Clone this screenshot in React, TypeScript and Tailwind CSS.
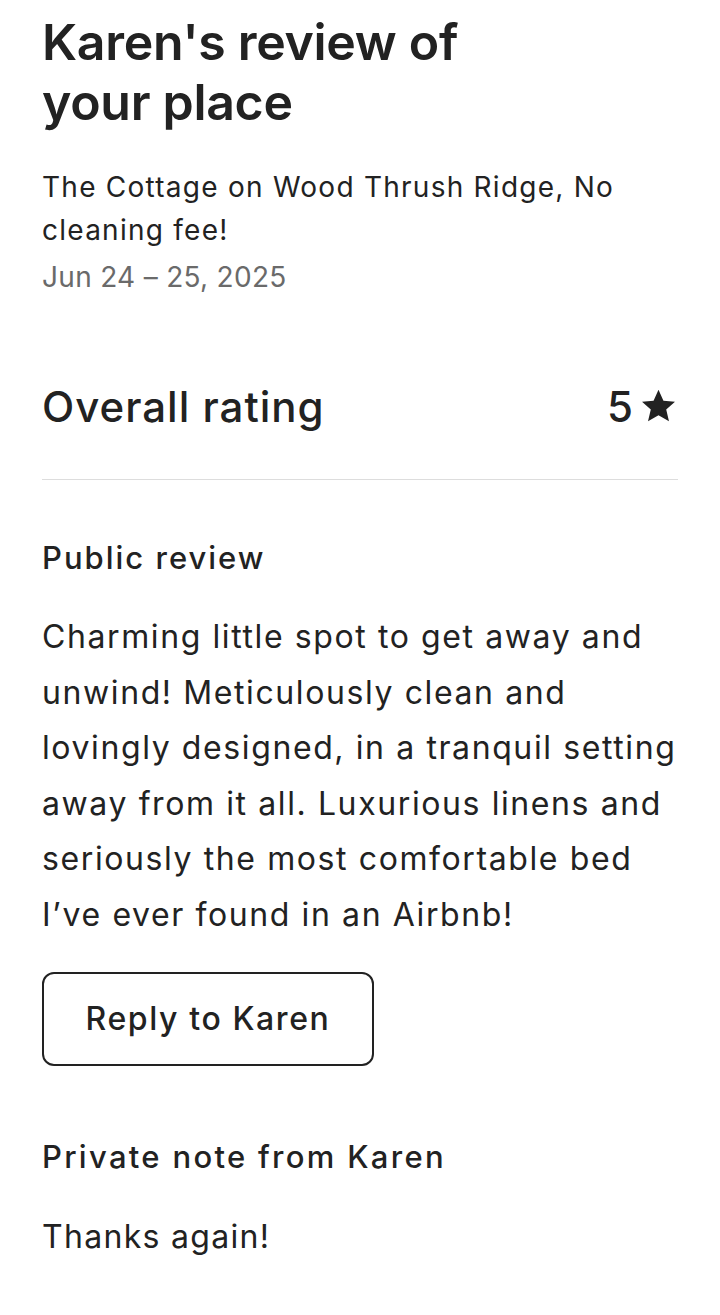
import React from "react";

const reviewLines = [
  "Charming little spot to get away and",
  "unwind! Meticulously clean and",
  "lovingly designed, in a tranquil setting",
  "away from it all. Luxurious linens and",
  "seriously the most comfortable bed",
  "I’ve ever found in an Airbnb!",
];

export default function App() {
  return (
    <div
      className="w-[720px] min-h-[1315px] bg-white px-[42px] pt-[12px] text-[#222222]"
      style={{ fontFamily: "Inter, 'Noto Sans', sans-serif" }}
    >
      <h1 className="text-[50px] leading-[60px] font-semibold tracking-[-0.3px]">
        Karen's review of
        <br />
        your place
      </h1>
      <p className="mt-[34px] text-[28px] leading-[43px] tracking-[1.25px]">
        The Cottage on Wood Thrush Ridge, No cleaning fee!
      </p>
      <p className="mt-[4px] text-[28px] leading-[43px] tracking-[0.3px] text-[#6a6a6a]">
        Jun 24 – 25, 2025
      </p>

      <div className="mt-[84px] flex items-center justify-between">
        <h2 className="text-[42px] leading-[48px] font-medium tracking-[1px]">
          Overall rating
        </h2>
        <div className="flex items-center gap-[6px] text-[42px] leading-[48px] font-medium">
          <span>5</span>
          <svg width="39" height="37" viewBox="0 0 24 24" className="mt-[-2px]">
            <path
              fill="#222222"
              d="M12 1.2l3.2 7 7.5.7-5.7 5.1 1.8 7.6L12 17.7l-6.8 3.9 1.8-7.6-5.7-5.1 7.5-.7z"
            />
          </svg>
        </div>
      </div>

      <div className="mt-[48px] border-t border-[#dddddd]" />

      <h3 className="mt-[60px] text-[31px] leading-[36px] font-medium tracking-[2px]">
        Public review
      </h3>
      <p className="mt-[33px] text-[32px] leading-[55.6px] tracking-[1.6px]">
        {reviewLines.map((line) => (
          <span key={line} className="block whitespace-nowrap">
            {line}
          </span>
        ))}
      </p>

      <button className="mt-[29px] flex h-[94px] w-[332px] items-center justify-center rounded-[12px] border-2 border-[#222222] bg-white text-[32px] font-medium tracking-[1.6px] text-[#222222]">
        Reply to Karen
      </button>

      <h3 className="mt-[73px] text-[31px] leading-[36px] font-medium tracking-[2.3px]">
        Private note from Karen
      </h3>
      <p className="mt-[38px] text-[32px] leading-[48px] tracking-[1.3px]">
        Thanks again!
      </p>
    </div>
  );
}
